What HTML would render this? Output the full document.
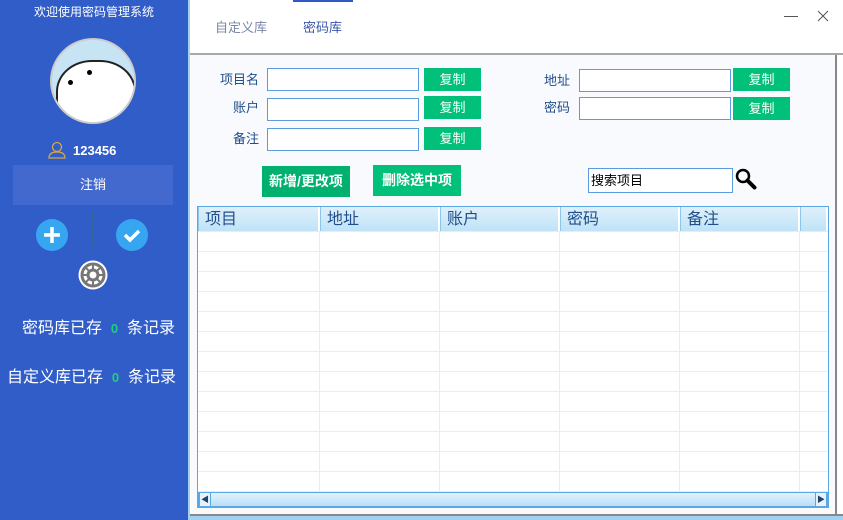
<!DOCTYPE html>
<html><head><meta charset="utf-8"><style>
*{margin:0;padding:0;box-sizing:border-box}
body{width:843px;height:520px;overflow:hidden;background:#fff;font-family:"Liberation Sans","Noto Sans CJK SC",sans-serif;position:relative}
.a{position:absolute}
#side{left:0;top:0;width:188px;height:520px;background:#315dc9;color:#fff}
.inp{position:absolute;height:23px;width:152px;border:1px solid #5b9be0;background:#fff}
.btn{position:absolute;height:23px;width:57px;background:#00c07a;color:#fff;font-size:13px;text-align:center;line-height:23px}
.lbl{position:absolute;font-size:13px;color:#1f4e8a;text-align:right;line-height:16px}
.big{position:absolute;background:#00b06e;color:#fff;font-size:14px;font-weight:bold;text-align:center;line-height:31px;height:31px;width:88px}
.hd{position:absolute;top:207px;height:24px;background:linear-gradient(#dff0fb,#bfe3f7);border-right:2px solid #fff;border-left:1px solid #8ec6ea;font-size:16px;color:#1f4e8a;line-height:26px;padding-left:6px}
</style></head><body>
<div id="side" class="a">
<div class="a" style="left:0;top:3px;width:188px;text-align:center;font-size:12px">欢迎使用密码管理系统</div>
<div class="a" style="left:50px;top:38px;width:86px;height:86px;border-radius:50%;background:#c7e4f5;border:2px solid #ccc;overflow:hidden">
<div class="a" style="left:4px;top:20px;width:80px;height:70px;border-radius:45% 45% 10% 10%;background:#fff;border:2px solid #222"></div>
<div class="a" style="left:16px;top:40px;width:5px;height:5px;border-radius:50%;background:#000"></div>
<div class="a" style="left:35px;top:30px;width:5px;height:5px;border-radius:50%;background:#000"></div>
</div>
<svg class="a" style="left:48px;top:141px" width="18" height="18" viewBox="0 0 18 18"><circle cx="9" cy="6" r="4.5" fill="none" stroke="#d9a640" stroke-width="1.3"/><path d="M1 17c0-5 4-6 8-6s8 1 8 6z" fill="none" stroke="#d9a640" stroke-width="1.3"/></svg>
<div class="a" style="left:73px;top:143px;font-size:13px;font-weight:bold">123456</div>
<div class="a" style="left:13px;top:165px;width:160px;height:40px;background:#4369cf;text-align:center;line-height:40px;font-size:13px">注销</div>
<div class="a" style="left:92px;top:212px;width:1px;height:38px;background:#2d6a9a"></div>
<svg class="a" style="left:36px;top:219px" width="32" height="32"><circle cx="16" cy="16" r="16" fill="#36a6f0"/><path d="M16 8v16M8 16h16" stroke="#fff" stroke-width="3.5"/></svg>
<svg class="a" style="left:116px;top:219px" width="32" height="32"><circle cx="16" cy="16" r="16" fill="#36a6f0"/><path d="M9 16l5 5 9-9" fill="none" stroke="#fff" stroke-width="3.5"/></svg>
<svg class="a" style="left:78px;top:260px" width="30" height="30"><circle cx="15" cy="15" r="14.5" fill="#fff"/><circle cx="15" cy="15" r="11" fill="none" stroke="#777" stroke-width="3"/><circle cx="15" cy="15" r="5" fill="none" stroke="#777" stroke-width="3"/><path d="M15 4v6M15 20v6M4 15h6M20 15h6M7 7l4 4M19 19l4 4M23 7l-4 4M7 23l4-4" stroke="#777" stroke-width="2"/></svg>
<div class="a" style="left:22px;top:319px;font-size:16px;line-height:20px;white-space:nowrap">密码库已存&nbsp;&nbsp;<span style="color:#1ed07a;font-size:13px;font-weight:bold">0</span>&nbsp;&nbsp;条记录</div>
<div class="a" style="left:7px;top:368px;font-size:16px;line-height:20px;white-space:nowrap">自定义库已存&nbsp;&nbsp;<span style="color:#1ed07a;font-size:13px;font-weight:bold">0</span>&nbsp;&nbsp;条记录</div>
</div>
<div class="a" style="left:188px;top:0;width:2px;height:520px;background:#9fd2f3"></div>
<div class="a" style="left:293px;top:0;width:60px;height:2px;background:#3059c7"></div>
<div class="a" style="left:215px;top:20px;font-size:13px;line-height:16px;color:#7a87a8">自定义库</div>
<div class="a" style="left:303px;top:20px;font-size:13px;line-height:16px;color:#3a55a8">密码库</div>
<div class="a" style="left:784px;top:16px;width:14px;height:1px;background:#555"></div>
<svg class="a" style="left:817px;top:10px" width="12" height="12"><path d="M1 1l10 10M11 1L1 11" stroke="#555" stroke-width="1"/></svg>
<div class="a" style="left:190px;top:53px;width:653px;height:2px;background:#a8a8a8"></div>
<div class="a" style="left:190px;top:55px;width:647px;height:460px;background:#f9fafd;border-right:2px solid #888"></div>
<div class="a" style="left:190px;top:514px;width:653px;height:2px;background:#888"></div>
<div class="a" style="left:190px;top:516px;width:653px;height:4px;background:#9fd2f3"></div>
<div class="lbl" style="left:215px;top:72px;width:44px">项目名</div>
<div class="lbl" style="left:215px;top:100px;width:44px">账户</div>
<div class="lbl" style="left:215px;top:131px;width:44px">备注</div>
<div class="inp" style="left:267px;top:68px"></div><div class="btn" style="left:424px;top:68px">复制</div>
<div class="inp" style="left:267px;top:98px"></div><div class="btn" style="left:424px;top:96px">复制</div>
<div class="inp" style="left:267px;top:128px"></div><div class="btn" style="left:424px;top:127px">复制</div>
<div class="lbl" style="left:540px;top:73px;width:30px">地址</div>
<div class="lbl" style="left:540px;top:100px;width:30px">密码</div>
<div class="inp" style="left:579px;top:69px"></div><div class="btn" style="left:733px;top:68px">复制</div>
<div class="inp" style="left:579px;top:97px"></div><div class="btn" style="left:733px;top:97px">复制</div>
<div class="big" style="left:262px;top:166px">新增/更改项</div>
<div class="big" style="left:373px;top:165px;background:#00c07a">删除选中项</div>
<div class="a" style="left:588px;top:168px;width:145px;height:25px;border:1px solid #5b9be0;background:#fff;font-size:13px;line-height:23px;padding-left:2px">搜索项目</div>
<svg class="a" style="left:735px;top:168px" width="22" height="22"><circle cx="8" cy="8" r="6" fill="none" stroke="#000" stroke-width="2.5"/><path d="M12.5 12.5l7 7" stroke="#000" stroke-width="4" stroke-linecap="round"/></svg>
<div class="a" style="left:197px;top:206px;width:632px;height:302px;border:1px solid #5aa7e6;background:#fff;overflow:hidden">
<div class="a" style="left:0;top:0;width:632px;height:286px;background-image:repeating-linear-gradient(#fff 0 19px,#ececec 19px 20px);background-position:0 5px"></div>
<div class="a" style="left:121px;top:0;width:1px;height:286px;background:#ececec"></div>
<div class="a" style="left:241px;top:0;width:1px;height:286px;background:#ececec"></div>
<div class="a" style="left:361px;top:0;width:1px;height:286px;background:#ececec"></div>
<div class="a" style="left:481px;top:0;width:1px;height:286px;background:#ececec"></div>
<div class="a" style="left:601px;top:0;width:1px;height:286px;background:#ececec"></div>
</div>
<div class="hd" style="left:198px;width:122px">项目</div>
<div class="hd" style="left:320px;width:120px">地址</div>
<div class="hd" style="left:440px;width:120px">账户</div>
<div class="hd" style="left:560px;width:120px">密码</div>
<div class="hd" style="left:680px;width:120px">备注</div>
<div class="hd" style="left:800px;width:28px"></div>
<div class="a" style="left:198px;top:492px;width:630px;height:15px;background:linear-gradient(#e3f2fc,#b8def5);border:1px solid #5aa7e6"></div>
<div class="a" style="left:199px;top:492px;width:12px;height:15px;border:1px solid #5aa7e6;background:#e6f3fc;font-size:8px;color:#246;text-align:center;line-height:13px">◀</div>
<div class="a" style="left:815px;top:492px;width:12px;height:15px;border:1px solid #5aa7e6;background:#e6f3fc;font-size:8px;color:#246;text-align:center;line-height:13px">▶</div>
</body></html>
